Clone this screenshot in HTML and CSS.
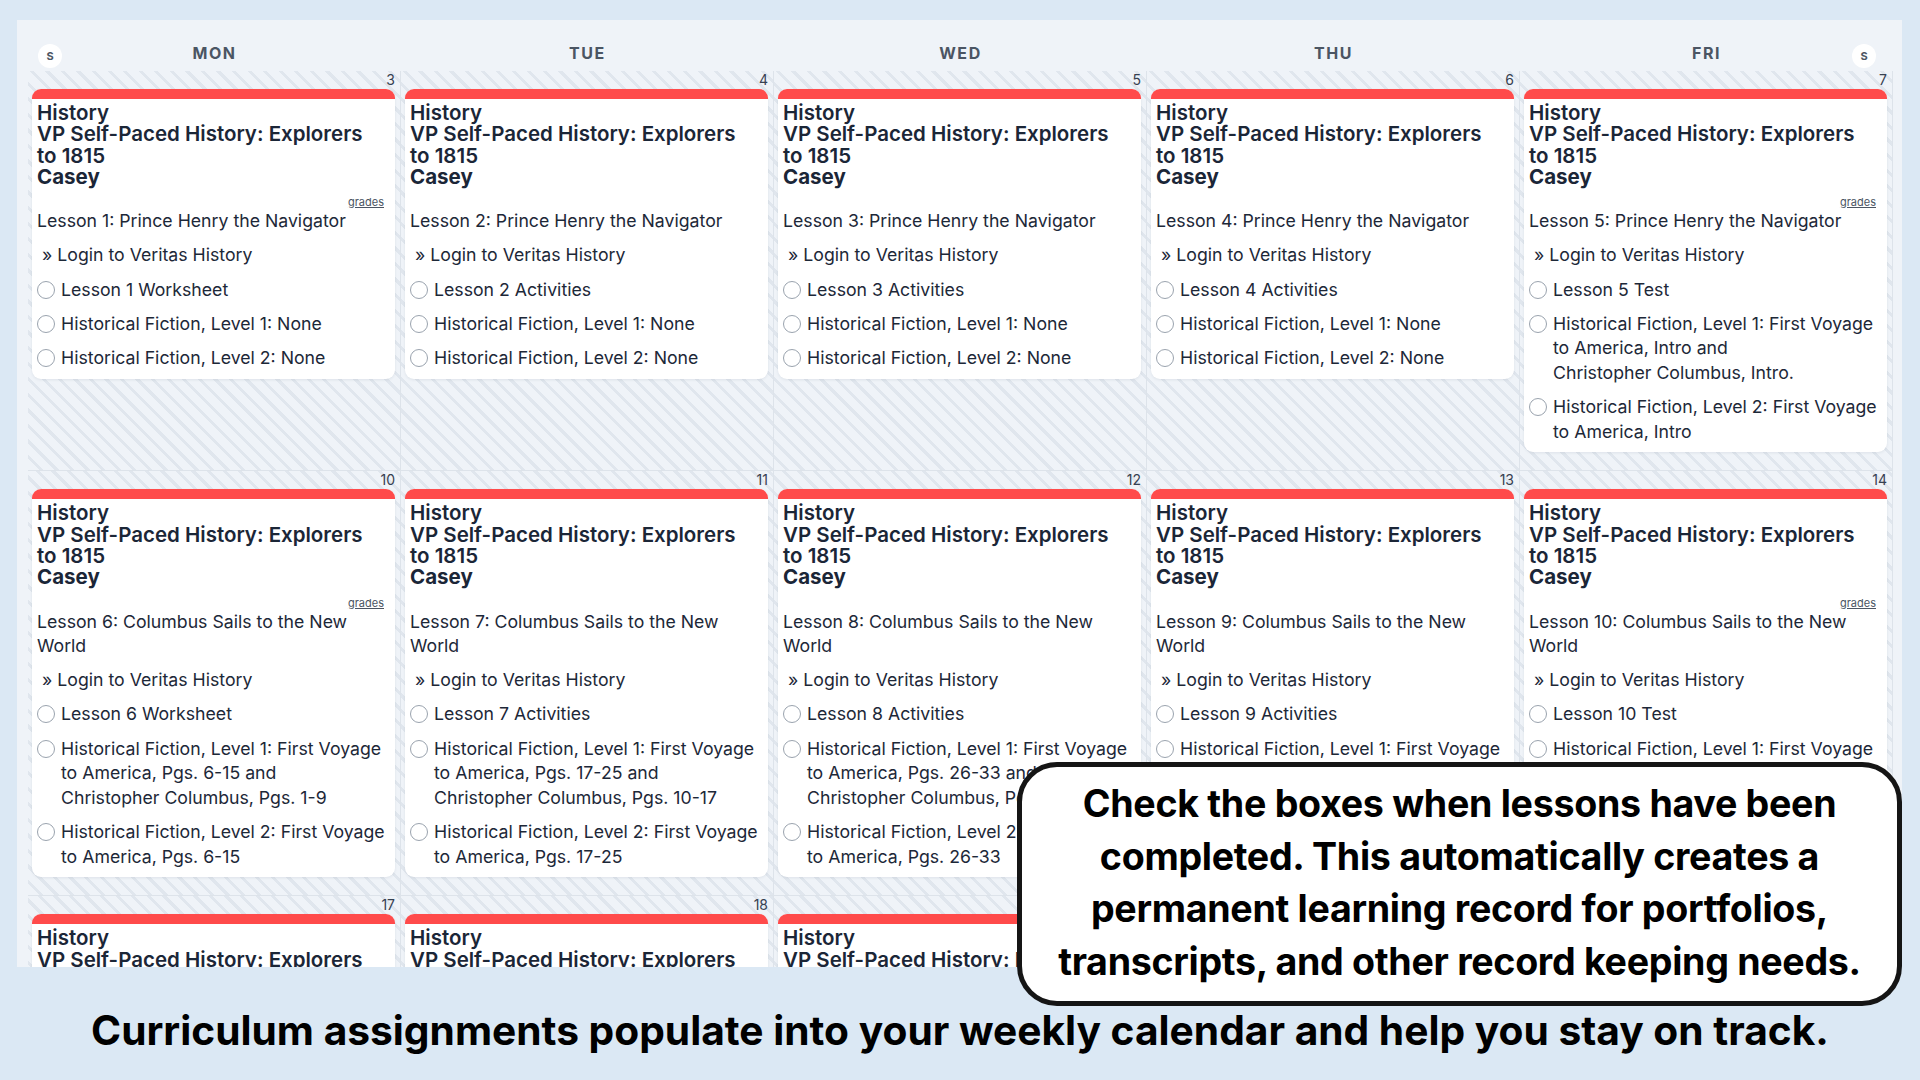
FILE: index.html
```html
<!DOCTYPE html>
<html lang="en">
<head>
<meta charset="UTF-8">
<title>Weekly Calendar</title>
<link rel="stylesheet" href="styles.css">
</head>
<body>

<div id="page">

  <div id="calendar">
    <div class="weekdays">
      <span class="weekend-badge left">S</span>
      <div class="weekday">MON</div>
      <div class="weekday">TUE</div>
      <div class="weekday">WED</div>
      <div class="weekday">THU</div>
      <div class="weekday">FRI</div>
      <span class="weekend-badge right">S</span>
    </div>

    <!-- week 1 -->
    <div class="week">
      <div class="day">
        <div class="date">3</div>
        <div class="card">
          <div class="card-bar"></div>
          <div class="card-body">
            <div class="subject">History</div>
            <div class="course">VP Self-Paced History: Explorers<br>to 1815</div>
            <div class="student">Casey</div>
            <a class="grades">grades</a>
            <div class="lesson">Lesson 1: Prince Henry the Navigator</div>
            <ul class="tasks">
              <li class="link">» Login to Veritas History</li>
              <li><span class="check"></span><span>Lesson 1 Worksheet</span></li>
              <li><span class="check"></span><span>Historical Fiction, Level 1: None</span></li>
              <li><span class="check"></span><span>Historical Fiction, Level 2: None</span></li>
            </ul>
          </div>
        </div>
      </div>
      <div class="day">
        <div class="date">4</div>
        <div class="card">
          <div class="card-bar"></div>
          <div class="card-body">
            <div class="subject">History</div>
            <div class="course">VP Self-Paced History: Explorers<br>to 1815</div>
            <div class="student">Casey</div>
            <a class="grades hidden">grades</a>
            <div class="lesson">Lesson 2: Prince Henry the Navigator</div>
            <ul class="tasks">
              <li class="link">» Login to Veritas History</li>
              <li><span class="check"></span><span>Lesson 2 Activities</span></li>
              <li><span class="check"></span><span>Historical Fiction, Level 1: None</span></li>
              <li><span class="check"></span><span>Historical Fiction, Level 2: None</span></li>
            </ul>
          </div>
        </div>
      </div>
      <div class="day">
        <div class="date">5</div>
        <div class="card">
          <div class="card-bar"></div>
          <div class="card-body">
            <div class="subject">History</div>
            <div class="course">VP Self-Paced History: Explorers<br>to 1815</div>
            <div class="student">Casey</div>
            <a class="grades hidden">grades</a>
            <div class="lesson">Lesson 3: Prince Henry the Navigator</div>
            <ul class="tasks">
              <li class="link">» Login to Veritas History</li>
              <li><span class="check"></span><span>Lesson 3 Activities</span></li>
              <li><span class="check"></span><span>Historical Fiction, Level 1: None</span></li>
              <li><span class="check"></span><span>Historical Fiction, Level 2: None</span></li>
            </ul>
          </div>
        </div>
      </div>
      <div class="day">
        <div class="date">6</div>
        <div class="card">
          <div class="card-bar"></div>
          <div class="card-body">
            <div class="subject">History</div>
            <div class="course">VP Self-Paced History: Explorers<br>to 1815</div>
            <div class="student">Casey</div>
            <a class="grades hidden">grades</a>
            <div class="lesson">Lesson 4: Prince Henry the Navigator</div>
            <ul class="tasks">
              <li class="link">» Login to Veritas History</li>
              <li><span class="check"></span><span>Lesson 4 Activities</span></li>
              <li><span class="check"></span><span>Historical Fiction, Level 1: None</span></li>
              <li><span class="check"></span><span>Historical Fiction, Level 2: None</span></li>
            </ul>
          </div>
        </div>
      </div>
      <div class="day">
        <div class="date">7</div>
        <div class="card">
          <div class="card-bar"></div>
          <div class="card-body">
            <div class="subject">History</div>
            <div class="course">VP Self-Paced History: Explorers<br>to 1815</div>
            <div class="student">Casey</div>
            <a class="grades">grades</a>
            <div class="lesson">Lesson 5: Prince Henry the Navigator</div>
            <ul class="tasks">
              <li class="link">» Login to Veritas History</li>
              <li><span class="check"></span><span>Lesson 5 Test</span></li>
              <li><span class="check"></span><span>Historical Fiction, Level 1: First Voyage to America, Intro and<br>Christopher Columbus, Intro.</span></li>
              <li><span class="check"></span><span>Historical Fiction, Level 2: First Voyage to America, Intro</span></li>
            </ul>
          </div>
        </div>
      </div>
    </div>

    <!-- week 2 -->
    <div class="week">
      <div class="day">
        <div class="date">10</div>
        <div class="card">
          <div class="card-bar"></div>
          <div class="card-body">
            <div class="subject">History</div>
            <div class="course">VP Self-Paced History: Explorers<br>to 1815</div>
            <div class="student">Casey</div>
            <a class="grades">grades</a>
            <div class="lesson">Lesson 6: Columbus Sails to the New World</div>
            <ul class="tasks">
              <li class="link">» Login to Veritas History</li>
              <li><span class="check"></span><span>Lesson 6 Worksheet</span></li>
              <li><span class="check"></span><span>Historical Fiction, Level 1: First Voyage to America, Pgs. 6-15 and<br>Christopher Columbus, Pgs. 1-9</span></li>
              <li><span class="check"></span><span>Historical Fiction, Level 2: First Voyage to America, Pgs. 6-15</span></li>
            </ul>
          </div>
        </div>
      </div>
      <div class="day">
        <div class="date">11</div>
        <div class="card">
          <div class="card-bar"></div>
          <div class="card-body">
            <div class="subject">History</div>
            <div class="course">VP Self-Paced History: Explorers<br>to 1815</div>
            <div class="student">Casey</div>
            <a class="grades hidden">grades</a>
            <div class="lesson">Lesson 7: Columbus Sails to the New World</div>
            <ul class="tasks">
              <li class="link">» Login to Veritas History</li>
              <li><span class="check"></span><span>Lesson 7 Activities</span></li>
              <li><span class="check"></span><span>Historical Fiction, Level 1: First Voyage to America, Pgs. 17-25 and<br>Christopher Columbus, Pgs. 10-17</span></li>
              <li><span class="check"></span><span>Historical Fiction, Level 2: First Voyage to America, Pgs. 17-25</span></li>
            </ul>
          </div>
        </div>
      </div>
      <div class="day">
        <div class="date">12</div>
        <div class="card">
          <div class="card-bar"></div>
          <div class="card-body">
            <div class="subject">History</div>
            <div class="course">VP Self-Paced History: Explorers<br>to 1815</div>
            <div class="student">Casey</div>
            <a class="grades hidden">grades</a>
            <div class="lesson">Lesson 8: Columbus Sails to the New World</div>
            <ul class="tasks">
              <li class="link">» Login to Veritas History</li>
              <li><span class="check"></span><span>Lesson 8 Activities</span></li>
              <li><span class="check"></span><span>Historical Fiction, Level 1: First Voyage to America, Pgs. 26-33 and<br>Christopher Columbus, Pgs. 18-26</span></li>
              <li><span class="check"></span><span>Historical Fiction, Level 2: First Voyage to America, Pgs. 26-33</span></li>
            </ul>
          </div>
        </div>
      </div>
      <div class="day">
        <div class="date">13</div>
        <div class="card">
          <div class="card-bar"></div>
          <div class="card-body">
            <div class="subject">History</div>
            <div class="course">VP Self-Paced History: Explorers<br>to 1815</div>
            <div class="student">Casey</div>
            <a class="grades hidden">grades</a>
            <div class="lesson">Lesson 9: Columbus Sails to the New World</div>
            <ul class="tasks">
              <li class="link">» Login to Veritas History</li>
              <li><span class="check"></span><span>Lesson 9 Activities</span></li>
              <li><span class="check"></span><span>Historical Fiction, Level 1: First Voyage to America, Pgs. 34-41 and<br>Christopher Columbus, Pgs. 27-35</span></li>
              <li><span class="check"></span><span>Historical Fiction, Level 2: First Voyage to America, Pgs. 34-41</span></li>
            </ul>
          </div>
        </div>
      </div>
      <div class="day">
        <div class="date">14</div>
        <div class="card">
          <div class="card-bar"></div>
          <div class="card-body">
            <div class="subject">History</div>
            <div class="course">VP Self-Paced History: Explorers<br>to 1815</div>
            <div class="student">Casey</div>
            <a class="grades">grades</a>
            <div class="lesson">Lesson 10: Columbus Sails to the New World</div>
            <ul class="tasks">
              <li class="link">» Login to Veritas History</li>
              <li><span class="check"></span><span>Lesson 10 Test</span></li>
              <li><span class="check"></span><span>Historical Fiction, Level 1: First Voyage to America, Pgs. 42-49 and<br>Christopher Columbus, Pgs. 36-44</span></li>
              <li><span class="check"></span><span>Historical Fiction, Level 2: First Voyage to America, Pgs. 42-49</span></li>
            </ul>
          </div>
        </div>
      </div>
    </div>

    <!-- week 3 -->
    <div class="week">
      <div class="day">
        <div class="date">17</div>
        <div class="card">
          <div class="card-bar"></div>
          <div class="card-body">
            <div class="subject">History</div>
            <div class="course">VP Self-Paced History: Explorers<br>to 1815</div>
            <div class="student">Casey</div>
          </div>
        </div>
      </div>
      <div class="day">
        <div class="date">18</div>
        <div class="card">
          <div class="card-bar"></div>
          <div class="card-body">
            <div class="subject">History</div>
            <div class="course">VP Self-Paced History: Explorers<br>to 1815</div>
            <div class="student">Casey</div>
          </div>
        </div>
      </div>
      <div class="day">
        <div class="date">19</div>
        <div class="card">
          <div class="card-bar"></div>
          <div class="card-body">
            <div class="subject">History</div>
            <div class="course">VP Self-Paced History: Explorers<br>to 1815</div>
            <div class="student">Casey</div>
          </div>
        </div>
      </div>
      <div class="day">
        <div class="date">20</div>
        <div class="card">
          <div class="card-bar"></div>
          <div class="card-body">
            <div class="subject">History</div>
            <div class="course">VP Self-Paced History: Explorers<br>to 1815</div>
            <div class="student">Casey</div>
          </div>
        </div>
      </div>
      <div class="day">
        <div class="date">21</div>
        <div class="card">
          <div class="card-bar"></div>
          <div class="card-body">
            <div class="subject">History</div>
            <div class="course">VP Self-Paced History: Explorers<br>to 1815</div>
            <div class="student">Casey</div>
          </div>
        </div>
      </div>
    </div>
  </div>

  <div id="callout">
    Check the boxes when lessons have been completed. This automatically creates a permanent learning record for portfolios, transcripts, and other record keeping needs.
  </div>

  <h1 id="caption">Curriculum assignments populate into your weekly calendar and help you stay on track.</h1>

</div>

</body>
</html>
```

FILE: styles.css
```css
:root {
  --page-bg: #dbe8f4;
  --panel-bg: #eff3f8;
  --stripe: rgba(196, 206, 218, 0.35);
  --grid-line: #dde3ea;
  --ink: #1b2637;
  --text: #1d2838;
  --muted: #4b5563;
  --accent: #ff4b4b;
}

html, body {
  margin: 0;
  padding: 0;
}

body {
  width: 1920px;
  height: 1080px;
  overflow: hidden;
  background: var(--page-bg);
  font-family: Inter, 'Noto Sans', sans-serif;
  color: var(--text);
}

#page {
  position: relative;
  width: 1920px;
  height: 1080px;
  padding-top: 20px;
  box-sizing: border-box;
}

#calendar {
  margin-left: 17px;
  width: 1885px;
  height: 947px;
  padding: 0 9px 0 11px;
  box-sizing: border-box;
  background: var(--panel-bg);
  overflow: hidden;
}

/* weekday header */
.weekdays {
  position: relative;
  display: grid;
  grid-template-columns: repeat(5, 373px);
  height: 51px;
}
.weekday {
  padding-top: 23px;
  line-height: 20px;
  text-align: center;
  font-size: 16px;
  font-weight: 700;
  letter-spacing: 1.6px;
  color: var(--muted);
}
.weekend-badge {
  position: absolute;
  top: 24px;
  width: 24px;
  height: 24px;
  border-radius: 50%;
  background: #fff;
  color: var(--muted);
  font-size: 11px;
  font-weight: 700;
  line-height: 24px;
  text-align: center;
}
.weekend-badge.left { left: 10px; }
.weekend-badge.right { left: 1824px; }

/* weeks */
.week {
  display: grid;
  grid-template-columns: repeat(5, 373px);
}
.week + .week .day {
  border-top: 1px solid var(--grid-line);
}
.day {
  padding: 0 5px 18px 4px;
  border-right: 1px solid var(--grid-line);
  background: repeating-linear-gradient(45deg, transparent 0 8px, var(--stripe) 8px 11px);
}
.date {
  height: 18px;
  line-height: 18px;
  text-align: right;
  font-size: 14px;
  color: #374151;
}

/* assignment card */
.card {
  background: #fff;
  border-radius: 9px;
  overflow: hidden;
  box-shadow: 0 1px 3px rgba(30, 41, 59, 0.08);
}
.card-bar {
  height: 10px;
  background: var(--accent);
}
.card-body {
  padding: 3px 8px 8px 5px;
}
.subject, .course, .student {
  font-size: 20.5px;
  line-height: 21.3px;
  font-weight: 600;
  color: var(--ink);
}
.student {
  font-weight: 700;
}
.grades {
  display: block;
  margin: 8px 3px 0 0;
  text-align: right;
  font-size: 11px;
  line-height: 14px;
  color: #4b5563;
  text-decoration: underline;
}
.grades.hidden {
  visibility: hidden;
}
.lesson {
  font-size: 17.7px;
  line-height: 24.6px;
}
.tasks {
  list-style: none;
  margin: 0;
  padding: 0;
}
.tasks li {
  display: flex;
  align-items: flex-start;
  margin-top: 9.6px;
  font-size: 17.7px;
  line-height: 24.6px;
}
.tasks li.link {
  padding-left: 5px;
}
.check {
  flex-shrink: 0;
  width: 16px;
  height: 16px;
  margin: 3px 6px 0 0;
  border: 1.5px solid #9aa3ae;
  border-radius: 50%;
  background: #fff;
}

/* overlay note */
#callout {
  position: absolute;
  left: 1017px;
  top: 762px;
  width: 885px;
  height: 244px;
  box-sizing: border-box;
  padding: 11px 16px 0;
  border: 5px solid #151515;
  border-radius: 40px;
  background: #fff;
  color: #000;
  text-align: center;
  font-size: 37.6px;
  font-weight: 700;
  line-height: 52.5px;
  letter-spacing: -0.3px;
}

#caption {
  margin: 0;
  padding-top: 41px;
  text-align: center;
  font-size: 40.7px;
  font-weight: 700;
  line-height: 46px;
  color: #000;
}
```
